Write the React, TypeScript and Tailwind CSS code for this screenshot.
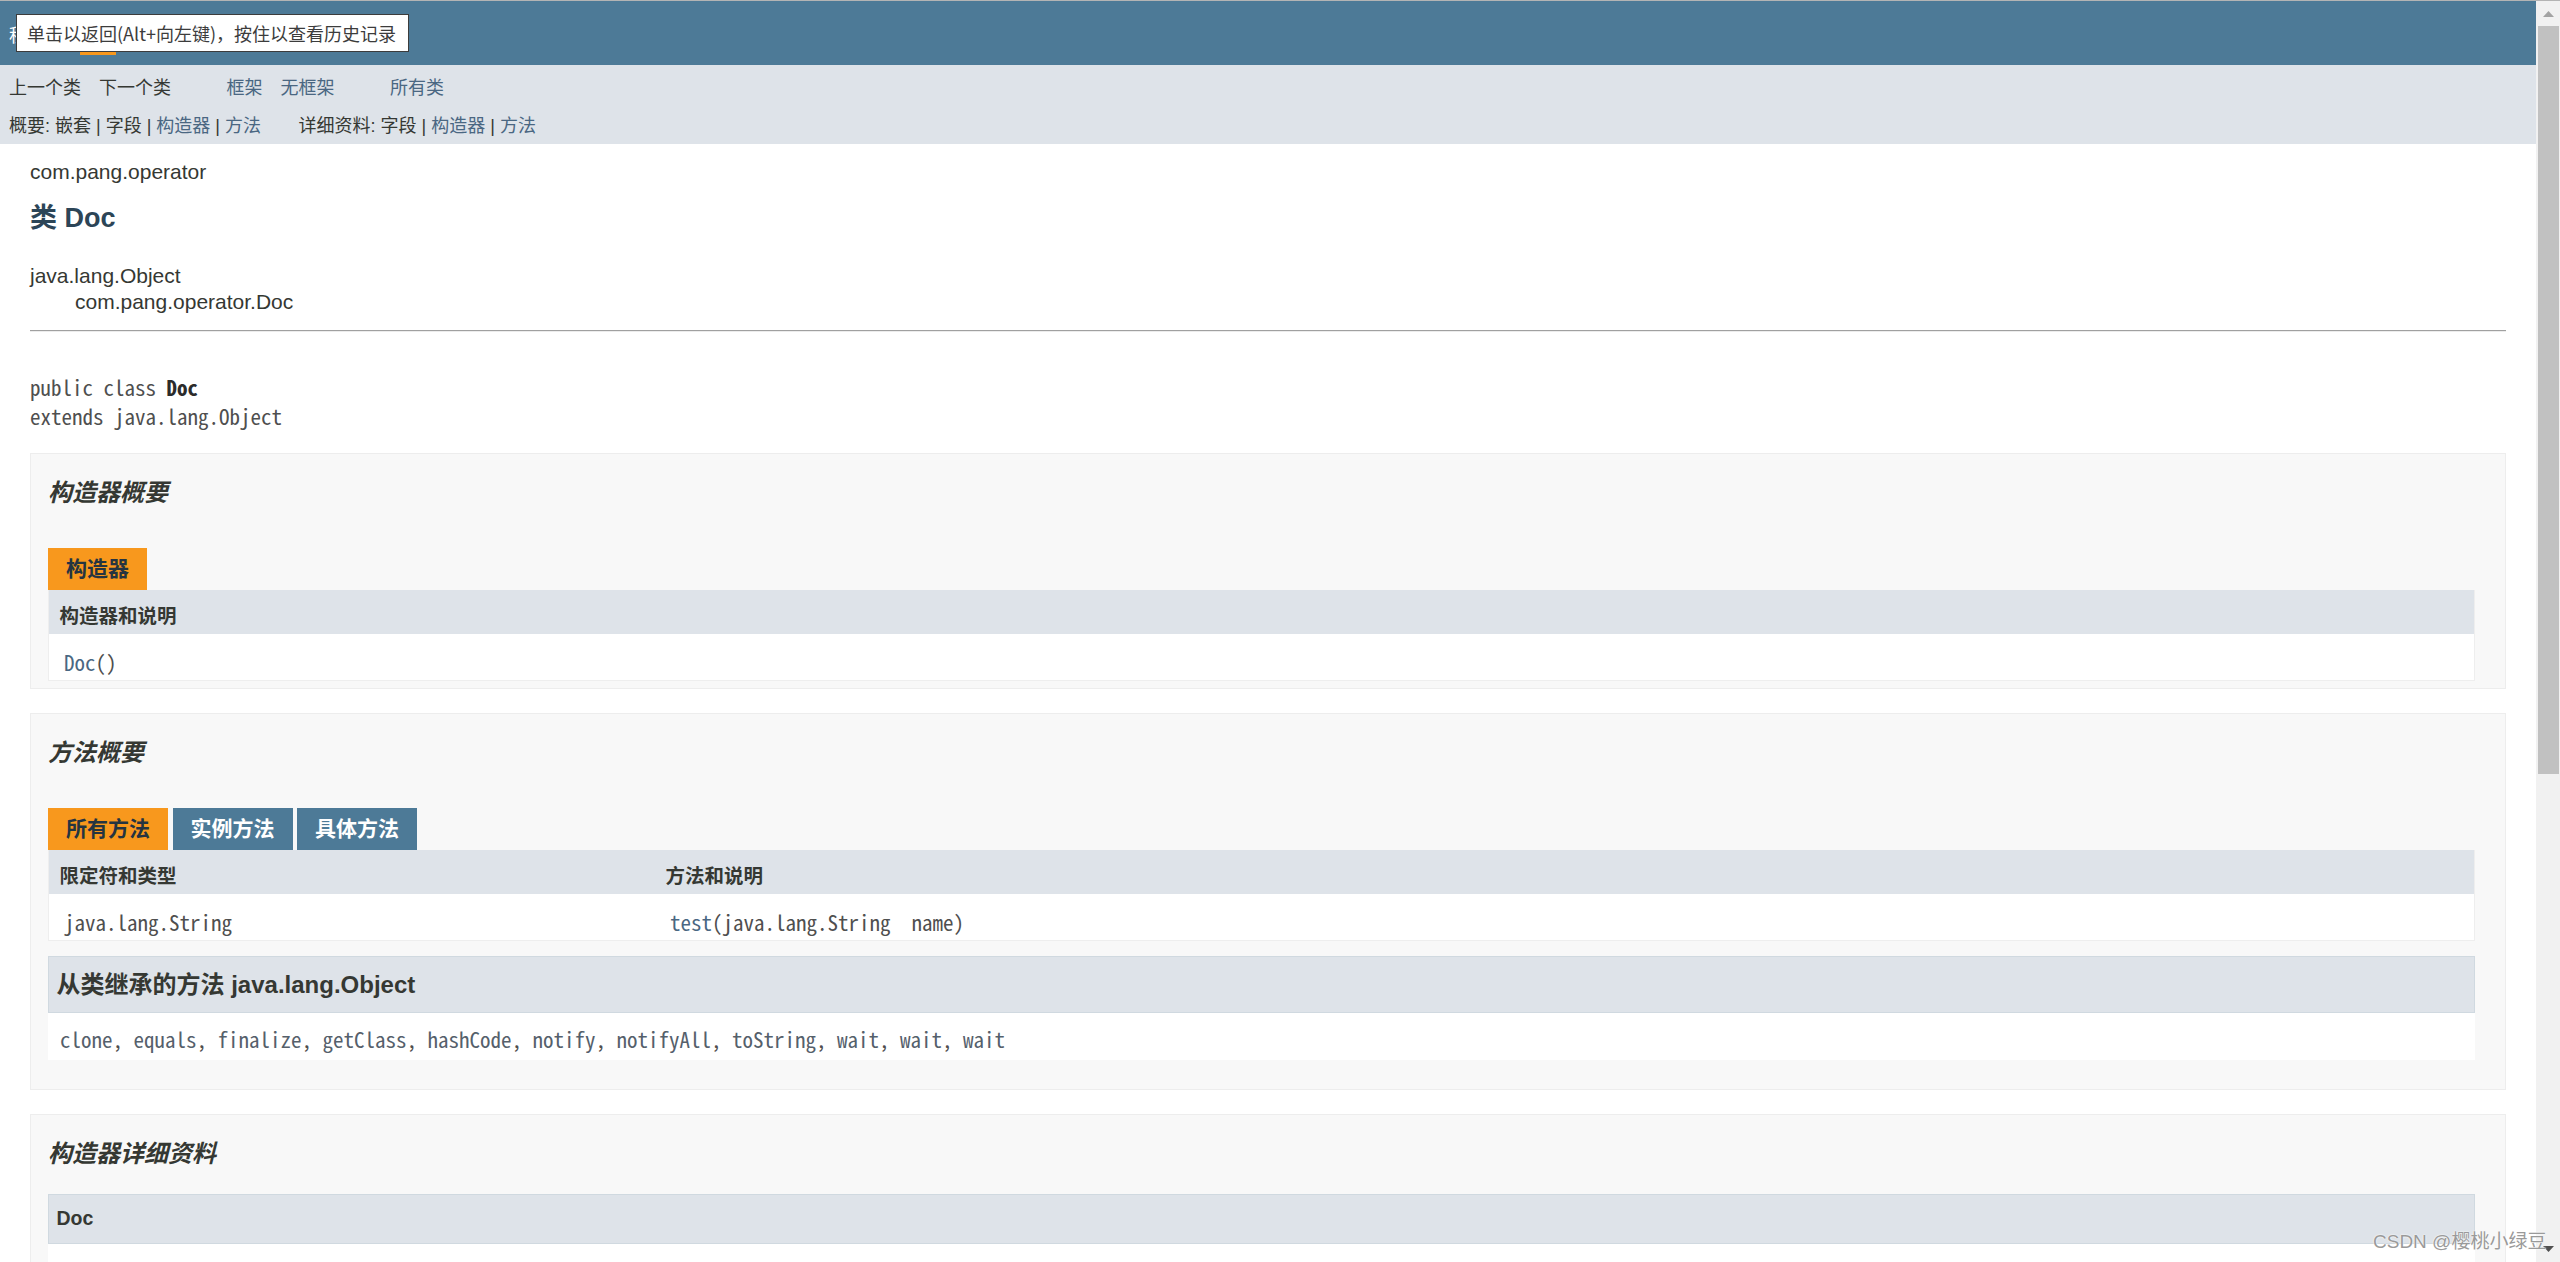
import React from "react";

const mono = "font-['Noto_Sans_Mono_CJK_SC','Liberation_Mono',monospace] text-[#4f4f4f]";

function Tab({ label, active }: { label: string; active?: boolean }) {
  return (
    <div
      className={
        "mr-[4.5px] flex h-[42px] items-center px-[18px] text-[21px] font-bold " +
        (active ? "bg-[#F8981D] text-[#253441]" : "bg-[#4D7A97] text-white")
      }
    >
      {label}
    </div>
  );
}

function SummaryTable({
  head1,
  head2,
  c1,
  c2,
}: {
  head1: string;
  head2?: string;
  c1: React.ReactNode;
  c2?: React.ReactNode;
}) {
  return (
    <div className="border-x border-b border-[#eeeeee]">
      <div className="flex h-[44px] bg-[#dee3e9] text-[19.5px] font-bold">
        <div className="w-[606px] shrink-0 pl-[10.5px] pt-[12px] leading-[28px]">{head1}</div>
        {head2 && <div className="pl-[10.5px] pt-[12px] leading-[28px]">{head2}</div>}
      </div>
      <div className={"flex h-[46px] bg-white text-[21px] " + mono}>
        <div className="w-[606px] shrink-0 whitespace-pre pl-[15px] pt-[14px] leading-[28px]">{c1}</div>
        {c2 && <div className="whitespace-pre pl-[15px] pt-[14px] leading-[28px]">{c2}</div>}
      </div>
    </div>
  );
}

function Panel({ children, className = "" }: { children: React.ReactNode; className?: string }) {
  return (
    <div className={"border border-[#ededed] bg-[#f8f8f8] pl-[17px] pr-[30px] pb-[7px] " + className}>
      {children}
    </div>
  );
}

function H3({ children }: { children: React.ReactNode }) {
  return <h3 className="mt-[24px] h-[30px] text-[24px] font-bold italic leading-[30px]">{children}</h3>;
}

const L = ({ children }: { children: React.ReactNode }) => (
  <span className="text-[#4A6782]">{children}</span>
);

export default function App() {
  const methods = [
    "clone",
    "equals",
    "finalize",
    "getClass",
    "hashCode",
    "notify",
    "notifyAll",
    "toString",
    "wait",
    "wait",
    "wait",
  ];
  return (
    <div className="relative flex h-[1262px] w-[2560px] flex-col overflow-hidden bg-white font-['Liberation_Sans','Noto_Sans_CJK_SC',sans-serif] text-[#353833]">
      <div className="h-px w-full shrink-0 bg-[#b4b4b4]" />
      <div className="flex min-h-0 flex-1">
        <main className="min-w-0 flex-1 overflow-hidden">
          {/* top nav */}
          <div className="h-[64px] bg-[#4D7A97] pt-[15px] text-[18px] text-white">
            <ul className="flex">
              <li className="px-[9px] py-[7.5px] leading-[24px]">程序包</li>
              <li className="mx-[7.5px] bg-[#F8981D] px-[9px] py-[7.5px] leading-[24px] text-[#253441]">类</li>
              <li className="px-[9px] py-[7.5px] leading-[24px]">使用</li>
              <li className="px-[9px] py-[7.5px] leading-[24px]">树</li>
              <li className="px-[9px] py-[7.5px] leading-[24px]">已过时</li>
              <li className="px-[9px] py-[7.5px] leading-[24px]">索引</li>
              <li className="px-[9px] py-[7.5px] leading-[24px]">帮助</li>
            </ul>
          </div>
          {/* sub nav */}
          <div className="h-[79px] bg-[#dee3e9] text-[18px]">
            <div className="flex h-[46px] items-center">
              <ul className="mr-[37.5px] flex">
                <li className="px-[9px]">上一个类</li>
                <li className="px-[9px]">下一个类</li>
              </ul>
              <ul className="mr-[37.5px] flex text-[#4A6782]">
                <li className="px-[9px]">框架</li>
                <li className="px-[9px]">无框架</li>
              </ul>
              <ul className="flex text-[#4A6782]">
                <li className="px-[9px]">所有类</li>
              </ul>
            </div>
            <div className="flex h-[31px] items-center whitespace-pre pl-[9px]">
              <span className="mr-[37.5px]">
                概要: 嵌套 | 字段 | <L>构造器</L> | <L>方法</L>
              </span>
              <span>
                详细资料: 字段 | <L>构造器</L> | <L>方法</L>
              </span>
            </div>
          </div>

          {/* content */}
          <div className="px-[30px]">
            <div className="mt-[14px] h-[28px] text-[21px] leading-[28px]">com.pang.operator</div>
            <h2 className="mt-[14px] h-[36px] text-[27px] font-bold leading-[36px] text-[#2c4557]">类 Doc</h2>
            <div className="mt-[27px] text-[21px] leading-[26px]">java.lang.Object</div>
            <div className="pl-[45px] text-[21px] leading-[26px]">com.pang.operator.Doc</div>
            <div className="mt-[15px] h-[2px] border-t border-[#a0a0a0] bg-[#ececec]" />
            <div className={"mt-[41px] text-[21px] leading-[29px] " + mono}>
              <div>
                public class <b className="text-[#2b2b2b]">Doc</b>
              </div>
              <div>extends java.lang.Object</div>
            </div>

            {/* constructor summary */}
            <Panel className="mt-[22px]">
              <H3>构造器概要</H3>
              <div className="mt-[40px] flex">
                <Tab label="构造器" active />
              </div>
              <SummaryTable
                head1="构造器和说明"
                c1={
                  <>
                    <L>Doc</L>()
                  </>
                }
              />
            </Panel>

            {/* method summary */}
            <Panel className="mt-[24px]">
              <H3>方法概要</H3>
              <div className="mt-[40px] flex">
                <Tab label="所有方法" active />
                <Tab label="实例方法" />
                <Tab label="具体方法" />
              </div>
              <SummaryTable
                head1="限定符和类型"
                head2="方法和说明"
                c1="java.lang.String"
                c2={
                  <>
                    <L>test</L>(java.lang.String  name)
                  </>
                }
              />
              <div className="mt-[15px] mb-[22px] bg-white">
                <h3 className="flex h-[57px] items-center border border-[#d0d9e0] bg-[#dee3e9] pl-[7.5px] text-[24px] font-bold">
                  从类继承的方法 java.lang.Object
                </h3>
                <div className={"h-[47px] whitespace-pre pl-[12px] pt-[12px] text-[21px] leading-[28px] " + mono}>
                  {methods.map((m, i) => (
                    <React.Fragment key={i}>
                      <span className="text-[#55606b]">{m}</span>
                      {i < methods.length - 1 ? ", " : ""}
                    </React.Fragment>
                  ))}
                </div>
              </div>
            </Panel>

            {/* constructor detail */}
            <Panel className="mt-[24px]">
              <H3>构造器详细资料</H3>
              <div className="mt-[25px] bg-white">
                <h4 className="flex h-[50px] items-center border border-[#d0d9e0] bg-[#dee3e9] pl-[7.5px] text-[19.5px] font-bold">
                  Doc
                </h4>
                <div className="h-[80px]" />
              </div>
            </Panel>
          </div>
        </main>

        {/* scrollbar */}
        <aside className="relative flex w-[24px] shrink-0 flex-col bg-[#f1f1f1]">
          <div className="flex h-[25px] items-start justify-center pt-[10px]">
            <svg width="11" height="6" viewBox="0 0 11 6">
              <polygon points="0,6 11,6 5.5,0" fill="#a3a3a3" />
            </svg>
          </div>
          <div className="ml-[2px] mr-[1px] h-[748px] bg-[#c1c1c1]" />
          <div className="flex-1" />
          <div className="flex h-[25px] items-start justify-center pt-[9px]">
            <svg width="11" height="6" viewBox="0 0 11 6">
              <polygon points="0,0 11,0 5.5,6" fill="#505050" />
            </svg>
          </div>
        </aside>
      </div>

      {/* tooltip */}
      <div className="absolute left-[16px] top-[14px] flex h-[38px] w-[393px] items-center border border-[#3c3c3c] bg-white pl-[10px] font-['Noto_Sans_CJK_SC',sans-serif] text-[18px] text-[#3c3c3c]">
        单击以返回(Alt+向左键)，按住以查看历史记录
      </div>

      {/* watermark */}
      <div className="absolute left-[2373px] top-[1230px] whitespace-nowrap text-[19px] leading-[24px] text-[#9a9a9a] [text-shadow:0_0_1px_#ffffff,0_0_2px_#ffffff]">
        CSDN @樱桃小绿豆
      </div>
    </div>
  );
}
